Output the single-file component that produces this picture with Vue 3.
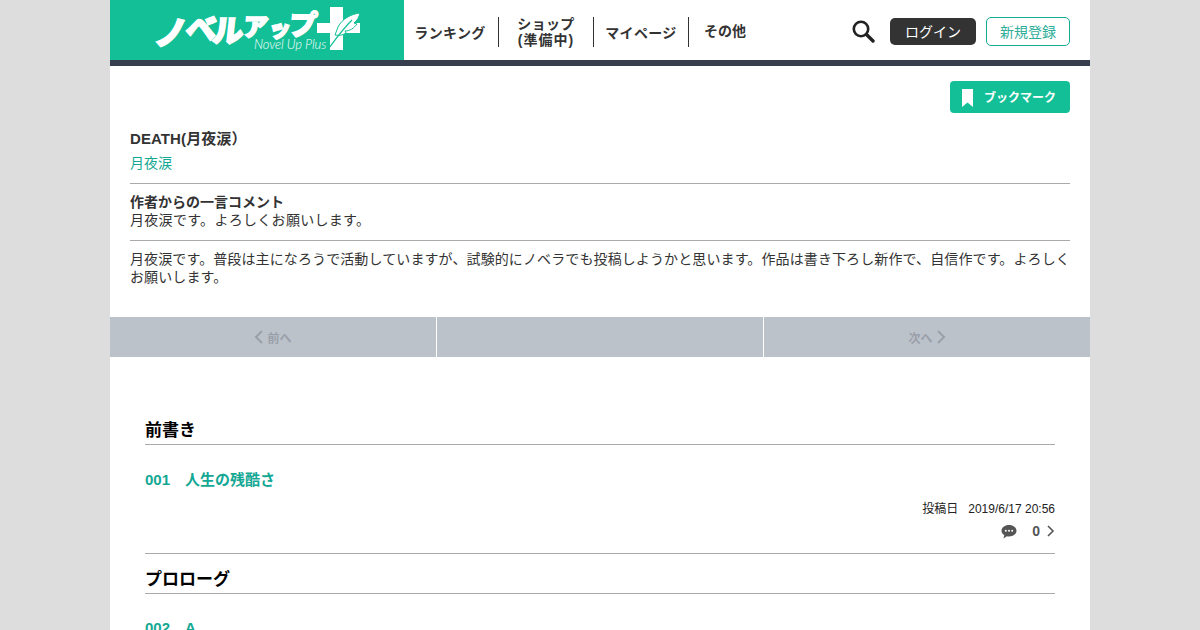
<template>
  <div class="page">
    <header class="header">
      <a class="logo">
        <span class="logo-jp">
          <span class="k1">ノ</span><span class="k2">ベ</span><span class="k3">ル</span><span class="k4">ア</span><span class="k5">ッ</span><span class="k6">プ</span>
        </span>
        <span class="logo-en">Novel Up Plus</span>
        <svg class="logo-plus" width="50" height="48" viewBox="0 0 50 48">
          <path d="M15 3h13v16h17v10H28v17H15V29H2V19h13z" fill="#fff" />
          <path d="M45 9C36 10 27 15 23 23l-3 8c4 1 8 0 11-2l-1-2c5 0 9-3 12-7l-3-1c3-2 5-6 6-10z" fill="#fff" stroke="#13bf97" stroke-width="1" />
          <path d="M14 44C20 36 27 26 37 16" fill="none" stroke="#13bf97" stroke-width="1.200" />
        </svg>
      </a>
      <nav class="nav">
        <a class="nav-item first">ランキング</a>
        <a class="nav-item shop"><span>ショップ</span><span class="soon">(準備中)</span></a>
        <a class="nav-item my">マイページ</a>
        <a class="nav-item other">その他</a>
      </nav>
      <div class="actions">
        <svg class="search" width="23" height="23" viewBox="0 0 23 23">
          <circle cx="9" cy="9" r="7.200" fill="none" stroke="#222" stroke-width="2.600" />
          <path d="M14.500 14.500l6.500 6.500" stroke="#222" stroke-width="3.400" stroke-linecap="round" />
        </svg>
        <a class="login">ログイン</a>
        <a class="signup">新規登録</a>
      </div>
    </header>

    <section class="intro">
      <div class="bookmark-row">
        <a class="bookmark">
          <svg width="11" height="18" viewBox="0 0 11 18"><path d="M0 0h11v18l-5.500-4.500L0 18z" fill="#fff" /></svg>
          <span>ブックマーク</span>
        </a>
      </div>
      <h1 class="title">DEATH(月夜涙）</h1>
      <a class="author">月夜涙</a>
      <div class="comment">
        <strong>作者からの一言コメント</strong>
        <p>月夜涙です。よろしくお願いします。</p>
      </div>
      <p class="summary">月夜涙です。普段は主になろうで活動していますが、試験的にノベラでも投稿しようかと思います。作品は書き下ろし新作で、自信作です。よろしくお願いします。</p>
    </section>

    <div class="pager">
      <div class="pager-cell">
        <svg width="9" height="14" viewBox="0 0 9 14"><path d="M8 1L2 7l6 6" fill="none" stroke="#9aa0aa" stroke-width="2" /></svg>
        <span>前へ</span>
      </div>
      <div class="pager-cell"></div>
      <div class="pager-cell">
        <span>次へ</span>
        <svg width="9" height="14" viewBox="0 0 9 14"><path d="M1 1l6 6-6 6" fill="none" stroke="#9aa0aa" stroke-width="2" /></svg>
      </div>
    </div>

    <main class="episodes">
      <h2 class="chapter">前書き</h2>
      <a class="episode-title"><span class="num">001</span>人生の残酷さ</a>
      <div class="meta"><span class="label">投稿日</span><span>2019/6/17 20:56</span></div>
      <div class="stats">
        <svg width="16" height="15" viewBox="0 0 16 15">
          <path d="M8 1c4.200 0 7.500 2.500 7.500 5.700S12.200 12.400 8 12.400c-.8 0-1.500-.1-2.200-.2L2.500 14.500l.8-3.400C1.500 10 .5 8.500.5 6.700.5 3.500 3.800 1 8 1z" fill="#555" />
          <circle cx="4.800" cy="6.700" r="1" fill="#fff" /><circle cx="8" cy="6.700" r="1" fill="#fff" /><circle cx="11.200" cy="6.700" r="1" fill="#fff" />
        </svg>
        <b>0</b>
        <svg width="8" height="12" viewBox="0 0 8 12"><path d="M1 1l5 5-5 5" fill="none" stroke="#555" stroke-width="1.600" /></svg>
      </div>
      <h2 class="chapter second">プロローグ</h2>
      <a class="episode-title last"><span class="num">002</span>A</a>
    </main>
  </div>
</template>

<script setup>
</script>

<style>
html, body { margin: 0; height: 630px; overflow: hidden; background: #ddd; }
</style>

<style scoped>
.page {
  width: 980px; margin: 0 auto; background: #fff; height: 630px; overflow: hidden;
  font-family: "Liberation Sans", "Noto Sans CJK JP", sans-serif; color: #333;
}
.header { display: flex; height: 60px; border-bottom: 6px solid #373f4f; }
.logo {
  position: relative; width: 294px; height: 60px; background: #13bf97; flex: none; display: block; color: #fff; overflow: hidden;
}
.logo-jp {
  position: absolute; left: 44px; top: 0; height: 60px; display: flex; white-space: nowrap;
  font-family: "Noto Sans CJK JP", sans-serif; font-weight: 900; -webkit-text-stroke: 1.6px #fff;
}
.logo-jp span { display: block; line-height: 1; transform: skewX(-6deg); }
.k1 { font-size: 33px; width: 31px; margin-top: 15px; }
.k2 { font-size: 31px; width: 27px; margin-top: 11px; }
.k3 { font-size: 31px; width: 30px; margin-top: 13px; }
.k4 { font-size: 25px; width: 26px; margin-top: 13px; }
.k5 { font-size: 22px; width: 20px; margin-top: 16px; }
.k6 { font-size: 28px; width: 28px; margin-top: 9px; }
.logo-en { position: absolute; left: 144px; top: 36px; font-size: 13px; font-weight: 300; font-style: italic; white-space: nowrap; font-family: "Lato", sans-serif; letter-spacing: -.1px; }
.logo-plus { position: absolute; left: 205px; top: 4px; }
.nav { display: flex; align-items: center; font-size: 14px; font-weight: 700; color: #333; letter-spacing: .35px; }
.nav-item { display: flex; flex-direction: column; align-items: center; justify-content: center; box-sizing: border-box; height: 30px; line-height: 16px; white-space: nowrap; border-right: 1px solid #333; margin-top: 4px; }
.soon { letter-spacing: 1px; }
.first { width: 95px; padding-right: 2px; line-height: 30px; padding-top: 1px; }
.shop { width: 95px; }
.my { width: 95px; line-height: 30px; padding-top: 1px; }
.other { width: 115px; border-right: 0; align-items: flex-start; padding-left: 15px; padding-bottom: 2px; letter-spacing: 0; }
.actions { margin-left: auto; display: flex; align-items: center; padding-right: 20px; padding-top: 2px; }
.search { margin-right: 15px; }
.login {
  width: 86px; height: 27px; background: #333; color: #fff; border-radius: 5px; font-size: 14px; display: flex; align-items: center; justify-content: center; margin-right: 10px;
}
.signup {
  width: 82px; height: 27px; border: 1px solid #13ab91; color: #2fae9a; border-radius: 5px; font-size: 14px; display: flex; align-items: center; justify-content: center;
}
.intro { padding: 15px 20px 31px; font-size: 14px; line-height: 18px; }
.bookmark-row { display: flex; justify-content: flex-end; }
.bookmark {
  width: 120px; height: 32px; box-sizing: border-box; padding: 1px 0 0 12px; background: #13bf97; border-radius: 4px; color: #fff; font-size: 12px; font-weight: 700; display: flex; align-items: center; gap: 11px;
}
.title { margin: 16px 0 0; font-size: 15px; font-weight: 700; line-height: 20px; color: #333; letter-spacing: .1px; }
.author { display: block; margin-top: 4px; color: #14a894; font-size: 14px; line-height: 20px; }
.comment { margin-top: 10px; border-top: 1px solid #aaa; border-bottom: 1px solid #aaa; padding: 9px 0 11px; }
.comment strong { display: block; }
.comment p { margin: 0; letter-spacing: .3px; }
.summary { margin: 9px 0 0; letter-spacing: .11px; }
.pager { display: flex; height: 40px; background: #bcc2ca; }
.pager-cell {
  flex: 1; display: flex; align-items: center; justify-content: center; gap: 4px; font-size: 12px; font-weight: 700; color: #9aa0aa; border-right: 1px solid #fff;
}
.pager-cell:last-child { border-right: 0; }
.episodes { padding: 62px 35px 0; }
.chapter { margin: 0; font-size: 17px; line-height: 24px; padding-bottom: 1px; color: #000; border-bottom: 1px solid #aaa; font-weight: 700; }
.chapter.second { margin-top: 14px; }
.episode-title { display: block; margin-top: 24px; font-size: 15px; line-height: 22px; font-weight: 700; color: #14a894; }
.episode-title.last { margin-top: 23px; }
.num { margin-right: 15px; }
.meta { display: flex; justify-content: flex-end; gap: 10px; margin-top: 10px; font-size: 12px; line-height: 16px; color: #222; }
.stats { display: flex; align-items: center; justify-content: flex-end; height: 30px; margin-top: -1px; font-size: 14px; color: #555; border-bottom: 1px solid #aaa; padding-bottom: 7px; }
.stats b { margin: 0 7px 0 15px; }
</style>
